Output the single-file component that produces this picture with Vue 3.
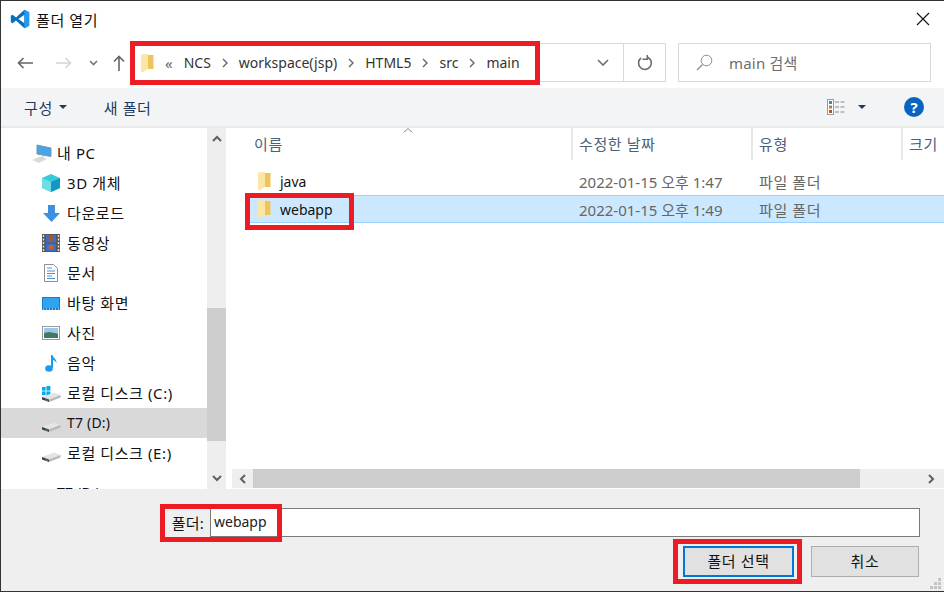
<script setup>
const crumbs = ['NCS', 'workspace(jsp)', 'HTML5', 'src', 'main']

const places = [
  { name: '내 PC', icon: 'pc', root: true },
  { name: '3D 개체', icon: 'cube' },
  { name: '다운로드', icon: 'down' },
  { name: '동영상', icon: 'film' },
  { name: '문서', icon: 'doc' },
  { name: '바탕 화면', icon: 'desk' },
  { name: '사진', icon: 'photo' },
  { name: '음악', icon: 'music' },
  { name: '로컬 디스크 (C:)', icon: 'win' },
  { name: 'T7 (D:)', icon: 'drive', active: true, latin: true },
  { name: '로컬 디스크 (E:)', icon: 'drive' },
  { name: 'T7 (D:)', icon: 'drive', root: true, gap: true, latin: true }
]

const files = [
  { name: 'java', date: '2022-01-15 오후 1:47', type: '파일 폴더' },
  { name: 'webapp', date: '2022-01-15 오후 1:49', type: '파일 폴더', selected: true }
]
</script>

<template>
  <div class="dialog">
    <div class="title-bar">
      <svg class="app-icon" width="20" height="20" viewBox="0 0 100 100">
        <path fill="#0a6fb8" d="M72 4 30 42 13 29 4 34v32l9 5 17-13 42 38 24-12V16z" />
        <path fill="#fff" d="M72 29 42 50l30 21z" />
        <path fill="#1f9cf0" d="M72 4l24 12v68L72 96z" />
      </svg>
      <span class="title-text">폴더 열기</span>
      <svg class="close-icon" width="14" height="14" viewBox="0 0 14 14">
        <path d="M1 1l12 12M13 1 1 13" stroke="#111" stroke-width="1.1" fill="none" />
      </svg>
    </div>

    <div class="nav-bar">
      <div class="nav-btn wide">
        <svg width="16" height="12" viewBox="0 0 16 12"><path d="M16 6H1.500M6.500 1l-5 5 5 5" stroke="#666" stroke-width="1.600" fill="none" /></svg>
      </div>
      <div class="nav-btn wide">
        <svg width="16" height="12" viewBox="0 0 16 12"><path d="M0 6h14.500M9.500 1l5 5-5 5" stroke="#d4d4d4" stroke-width="1.600" fill="none" /></svg>
      </div>
      <div class="nav-btn small">
        <svg width="9" height="6" viewBox="0 0 9 6"><path d="M1 1l3.500 3.500L8 1" stroke="#777" stroke-width="1.600" fill="none" /></svg>
      </div>
      <div class="nav-btn medium">
        <svg width="12" height="16" viewBox="0 0 12 16"><path d="M6 16V1.500M1 6.500l5-5 5 5" stroke="#666" stroke-width="1.600" fill="none" /></svg>
      </div>

      <div class="address">
        <svg class="crumb-folder" width="13" height="18" viewBox="0 0 13 18">
          <path fill="#eec45c" d="M6 1h6.500v14H6z" />
          <path fill="#fbe6a4" d="M0 .5 7 0v15l-5 3H0z" />
        </svg>
        <span class="crumb-more">«</span>
        <template v-for="(crumb, i) in crumbs" :key="crumb">
          <span class="crumb">{{ crumb }}</span>
          <svg v-if="i < crumbs.length - 1" class="crumb-sep" width="6" height="10" viewBox="0 0 6 10">
            <path d="M1 1l4 4-4 4" stroke="#666" stroke-width="1.400" fill="none" />
          </svg>
        </template>
        <svg class="address-drop" width="12" height="7" viewBox="0 0 12 7"><path d="M1 1l5 5 5-5" stroke="#6d6d6d" stroke-width="1.600" fill="none" /></svg>
        <div class="refresh">
          <svg width="16" height="16" viewBox="0 0 16 16">
            <path d="M10.600 2.200A6.400 6.400 0 1 1 4 3" stroke="#6d6d6d" stroke-width="1.600" fill="none" />
            <path d="M10.300 -.5v4.800H5.500" stroke="#6d6d6d" stroke-width="1.600" fill="none" />
          </svg>
        </div>
      </div>

      <div class="search">
        <svg width="17" height="17" viewBox="0 0 17 17">
          <circle cx="10.500" cy="6.500" r="5.300" stroke="#8a8a8a" stroke-width="1" fill="none" />
          <path d="M6.500 10.500 1 16" stroke="#8a8a8a" stroke-width="1.300" />
        </svg>
        <span>main 검색</span>
      </div>
    </div>

    <div class="tool-bar">
      <span class="tool-text">구성</span>
      <svg class="tool-caret" width="8" height="4" viewBox="0 0 8 4"><path d="M0 0h8L4 4z" fill="#1e3a5f" /></svg>
      <span class="tool-text new-folder">새 폴더</span>
      <svg class="view-icon" width="19" height="16" viewBox="0 0 19 16">
        <rect x=".5" y=".5" width="6" height="15" fill="#fff" stroke="#9a9a9a" />
        <rect x="2" y="2" width="3" height="3" fill="#3f83c6" />
        <rect x="2" y="6.500" width="3" height="3" fill="#a98b2e" />
        <rect x="2" y="11" width="3" height="3" fill="#c64a2e" />
        <path d="M8 3h4M13.500 3h4M8 8h4M13.500 8h4M8 13h4M13.500 13h4" stroke="#8a8a8a" />
      </svg>
      <svg class="view-caret" width="8" height="4" viewBox="0 0 8 4"><path d="M0 0h8L4 4z" fill="#1e3a5f" /></svg>
      <div class="help">?</div>
    </div>

    <div class="main">
      <div class="side">
        <div
          v-for="(place, i) in places"
          :key="i"
          class="place"
          :class="{ root: place.root, active: place.active, gap: place.gap }"
        >
          <span class="place-icon">
            <svg v-if="place.icon === 'pc'" width="20" height="22" viewBox="0 0 20 22">
              <path d="M5 3l14 3v8.500L5 12z" fill="#45a5e8" stroke="#7f93a5" />
              <path d="M11 13.500v2l-3 1" stroke="#a9b4bc" fill="none" />
              <path d="M0 18l8-3.500 7 2.500-8 4z" fill="#d8dadc" />
            </svg>
            <svg v-else-if="place.icon === 'cube'" width="18" height="18" viewBox="0 0 18 18">
              <path d="M9 0l9 4v10l-9 4-9-4V4z" fill="#35cbdc" />
              <path d="M9 8l9-4v10l-9 4z" fill="#1597c6" />
              <path d="M9 8 0 4v10l9 4z" fill="#6fdde8" />
            </svg>
            <svg v-else-if="place.icon === 'down'" class="down-icon" width="17" height="17" viewBox="0 0 17 17">
              <path d="M5 0h7v8h5l-8.500 9L0 8h5z" fill="#3f8fe0" />
            </svg>
            <svg v-else-if="place.icon === 'film'" width="18" height="18" viewBox="0 0 18 18">
              <rect width="18" height="18" fill="#555" />
              <path d="M1.500 1v16M16.500 1v16" stroke="#ddd" stroke-width="1.500" stroke-dasharray="2 1.500" />
              <rect x="4" y="1" width="10" height="7.500" fill="#3a6fd0" />
              <rect x="4" y="9.500" width="10" height="7.500" fill="#3a6fd0" />
              <circle cx="9" cy="4.500" r="2.500" fill="#b5532a" />
              <circle cx="9" cy="13" r="2.500" fill="#c8622c" />
            </svg>
            <svg v-else-if="place.icon === 'doc'" class="doc-icon" width="14" height="18" viewBox="0 0 14 18">
              <path d="M.5.500h9l4 4v13H.5z" fill="#fff" stroke="#8f8f8f" />
              <path d="M3 4h5M3 7h8M3 9.500h8M3 12h5M3 14.500h8" stroke="#4d94d6" />
            </svg>
            <svg v-else-if="place.icon === 'desk'" width="18" height="13" viewBox="0 0 18 13">
              <rect width="18" height="13" fill="#0f7fd6" />
              <rect x="1" y="1" width="16" height="10" fill="#2fa4ee" />
              <path d="M1 12h16" stroke="#fff" stroke-dasharray="1 2" />
            </svg>
            <svg v-else-if="place.icon === 'photo'" width="18" height="14" viewBox="0 0 18 14">
              <rect x=".5" y=".5" width="17" height="13" fill="#fff" stroke="#9a9a9a" />
              <rect x="2" y="2" width="14" height="5" fill="#9cc7e8" />
              <path d="M2 7l5-1 9 1.500V12H2z" fill="#3f7a62" />
            </svg>
            <svg v-else-if="place.icon === 'music'" class="music-icon" width="12" height="17" viewBox="0 0 12 17">
              <ellipse cx="4" cy="13.500" rx="3.800" ry="3.300" fill="#1a9bf0" />
              <path d="M6 13V0h1.500c.5 3 4.500 4 4 8-.8-2-3-3-3.500-3v8z" fill="#1a9bf0" />
            </svg>
            <svg v-else width="19" height="20" viewBox="0 0 19 20">
              <g v-if="place.icon === 'win'" fill="#00adef">
                <rect x="0" y="4" width="3.600" height="3.600" />
                <rect x="4.400" y="3" width="4" height="4.600" />
                <rect x="0" y="8.400" width="3.600" height="3.600" />
                <rect x="4.400" y="8.400" width="4" height="4.600" />
              </g>
              <path d="M0 14l12-4.500 6.500 2.500L7 16.500z" fill="#e2e4e6" />
              <path d="M7 16.500 18.500 12v2.500L7 19z" fill="#b5b9bc" />
              <path d="M0 14l7 2.500V19L0 16.500z" fill="#3f3f3f" />
              <path d="M3.500 16.700l2 .8" stroke="#4caf50" />
            </svg>
          </span>
          <span class="place-name" :class="{ latin: place.latin }">{{ place.name }}</span>
        </div>
      </div>

      <div class="side-scroll">
        <svg class="scroll-arrow" width="10" height="7" viewBox="0 0 10 7"><path d="M1 6l4-4 4 4" stroke="#606060" stroke-width="2" fill="none" /></svg>
        <div class="side-thumb"></div>
        <svg class="scroll-arrow bottom" width="10" height="7" viewBox="0 0 10 7"><path d="M1 1l4 4 4-4" stroke="#606060" stroke-width="2" fill="none" /></svg>
      </div>

      <div class="list">
        <div class="list-head">
          <div class="col-head first">
            이름
            <svg class="sort-caret" width="10" height="5" viewBox="0 0 10 5"><path d="M.5 4.500 5 .5l4.500 4" stroke="#8a8a8a" fill="none" /></svg>
          </div>
          <div class="col-head">수정한 날짜</div>
          <div class="col-head">유형</div>
          <div class="col-head">크기</div>
        </div>

        <div class="rows">
          <div v-for="file in files" :key="file.name" class="row" :class="{ selected: file.selected }">
            <div class="row-name">
              <svg width="13" height="18" viewBox="0 0 13 18">
                <path fill="#eec45c" d="M6 1h6.500v14H6z" />
                <path fill="#fbe6a4" d="M0 .5 7 0v15l-5 3H0z" />
              </svg>
              <span>{{ file.name }}</span>
            </div>
            <div class="row-cell date">{{ file.date }}</div>
            <div class="row-cell">{{ file.type }}</div>
          </div>
        </div>

        <div class="h-scroll">
          <svg class="h-arrow" width="7" height="10" viewBox="0 0 7 10"><path d="M6 1 2 5l4 4" stroke="#606060" stroke-width="2" fill="none" /></svg>
          <div class="h-thumb"></div>
          <svg class="h-arrow right" width="7" height="10" viewBox="0 0 7 10"><path d="M1 1l4 4-4 4" stroke="#606060" stroke-width="2" fill="none" /></svg>
        </div>
      </div>
    </div>

    <div class="footer">
      <div class="folder-row">
        <span class="folder-label">폴더:</span>
        <div class="folder-input">webapp</div>
      </div>
      <div class="button-row">
        <button class="btn primary">폴더 선택</button>
        <button class="btn">취소</button>
      </div>
      <svg class="grip" width="11" height="11" viewBox="0 0 11 11" fill="#c4c4c4">
        <rect x="8" y="0" width="3" height="3" />
        <rect x="4" y="4" width="3" height="3" />
        <rect x="8" y="4" width="3" height="3" />
        <rect x="0" y="8" width="3" height="3" />
        <rect x="4" y="8" width="3" height="3" />
        <rect x="8" y="8" width="3" height="3" />
      </svg>
    </div>

    <div class="mark mark-address"></div>
    <div class="mark mark-row"></div>
    <div class="mark mark-folder"></div>
    <div class="mark mark-button"></div>
  </div>
</template>

<style scoped>
.dialog {
  position: relative;
  width: 944px;
  height: 592px;
  box-sizing: border-box;
  border-top: 1px solid #333;
  border-left: 1px solid #333;
  border-bottom: 1px solid #333;
  background: #fff;
  display: flex;
  flex-direction: column;
  overflow: hidden;
  font-family: "Noto Sans", "Noto Sans CJK KR", sans-serif;
  font-size: 15px;
  letter-spacing: 0.6px;
  color: #111;
}

.title-bar {
  height: 40px;
  display: flex;
  align-items: center;
  padding: 0 0 4px 9px;
  box-sizing: border-box;
  flex-shrink: 0;
}

.title-text {
  margin-left: 6px;
}

.close-icon {
  margin-left: auto;
  margin-right: 14px;
}

.nav-bar {
  height: 47px;
  display: flex;
  align-items: flex-start;
  padding: 2px 0 0 4px;
  box-sizing: border-box;
  flex-shrink: 0;
}

.nav-btn {
  height: 39px;
  display: flex;
  align-items: center;
  justify-content: center;
}

.nav-btn.wide {
  width: 39px;
}

.nav-btn.small {
  width: 21px;
}

.nav-btn.medium {
  width: 30px;
}

.address {
  width: 532px;
  height: 39px;
  box-sizing: border-box;
  border: 1px solid #d9d9d9;
  display: flex;
  align-items: center;
  padding-left: 6px;
  font-size: 14px;
  letter-spacing: 0;
}

.crumb-more {
  margin: 0 11px;
  color: #666;
  font-size: 15px;
}

.crumb {
  color: #333;
}

.crumb-sep {
  margin: 0 11px;
}

.address-drop {
  margin-left: auto;
  margin-right: 14px;
}

.refresh {
  width: 42px;
  height: 37px;
  border-left: 1px solid #d9d9d9;
  box-sizing: border-box;
  display: flex;
  align-items: center;
  justify-content: center;
}

.search {
  width: 253px;
  height: 39px;
  margin-left: 12px;
  box-sizing: border-box;
  border: 1px solid #d9d9d9;
  display: flex;
  align-items: center;
  padding-left: 17px;
  gap: 16px;
  color: #6d6d6d;
  letter-spacing: 0.2px;
}

.tool-bar {
  height: 40px;
  box-sizing: border-box;
  background: #f3f4f6;
  border-bottom: 2px solid #e9e9e9;
  display: flex;
  align-items: center;
  padding-left: 23px;
  flex-shrink: 0;
}

.tool-text {
  color: #1e3a5f;
}

.tool-caret {
  margin-left: 6px;
}

.new-folder {
  margin-left: 37px;
}

.view-icon {
  margin-left: auto;
}

.view-caret {
  margin-left: 12px;
}

.help {
  width: 20px;
  height: 20px;
  margin: 0 20px 0 38px;
  border-radius: 50%;
  background: #0a63c0;
  color: #fff;
  font-size: 15px;
  font-weight: 700;
  letter-spacing: 0;
  line-height: 20px;
  text-align: center;
}

.main {
  flex: 1;
  min-height: 0;
  display: flex;
}

.side {
  width: 206px;
  padding-top: 10px;
  box-sizing: border-box;
  overflow: hidden;
  flex-shrink: 0;
}

.place {
  height: 30px;
  display: flex;
  align-items: center;
  padding-left: 41px;
}

.place.root {
  padding-left: 31px;
}

.place.gap {
  margin-top: 10px;
}

.place.active {
  background: #d9d9d9;
}

.place-icon {
  width: 25px;
  height: 20px;
  display: flex;
  align-items: center;
}

.down-icon {
  margin-left: 1px;
}

.doc-icon {
  margin-left: 2px;
}

.music-icon {
  margin-left: 3px;
}

.place-name {
  margin-bottom: 2px;
  white-space: nowrap;
}

.latin {
  font-size: 14px;
  letter-spacing: 0.2px;
}

.side-scroll {
  width: 19px;
  background: #eeeeee;
  display: flex;
  flex-direction: column;
  align-items: center;
  flex-shrink: 0;
}

.scroll-arrow {
  margin-top: 7px;
}

.scroll-arrow.bottom {
  margin-top: auto;
  margin-bottom: 7px;
}

.side-thumb {
  width: 19px;
  height: 133px;
  margin-top: 166px;
  background: #cdcdcd;
}

.list {
  flex: 1;
  min-width: 0;
  margin-left: 6px;
  display: flex;
  flex-direction: column;
}

.list-head {
  height: 32px;
  display: grid;
  grid-template-columns: 339px 180px 150px 1fr;
  flex-shrink: 0;
}

.col-head {
  position: relative;
  border-left: 2px solid #e8e8e8;
  padding-left: 6px;
  line-height: 32px;
  color: #4c607a;
  white-space: nowrap;
}

.col-head.first {
  border-left: none;
  padding-left: 22px;
}

.sort-caret {
  position: absolute;
  left: 171px;
  top: 0;
}

.rows {
  margin: 7px 0 0 18px;
}

.row {
  height: 28px;
  box-sizing: border-box;
  display: grid;
  grid-template-columns: 321px 180px 150px;
  align-items: center;
  border-top: 1px solid transparent;
  border-bottom: 1px solid transparent;
}

.row.selected {
  background: #cce8ff;
  border-color: #99d1ff;
}

.row-name {
  display: flex;
  align-items: center;
  gap: 9px;
  padding-left: 8px;
  color: #111;
  font-size: 14px;
  letter-spacing: 0;
}

.row-cell {
  padding-left: 8px;
  color: #666;
}

.row-cell.date {
  letter-spacing: 0;
}

.h-scroll {
  height: 19px;
  margin-top: auto;
  margin-bottom: 1px;
  background: #eeeeee;
  display: flex;
  align-items: center;
  flex-shrink: 0;
}

.h-arrow {
  margin: 0 7px;
}

.h-thumb {
  width: 607px;
  height: 19px;
  background: #cdcdcd;
}

.h-arrow.right {
  margin-left: auto;
  margin-right: 9px;
}

.footer {
  position: relative;
  height: 102px;
  box-sizing: border-box;
  background: #efefef;
  padding: 19px 25px 0 0;
  flex-shrink: 0;
}

.folder-row {
  display: flex;
  align-items: center;
  justify-content: flex-end;
  margin-right: -1px;
}

.folder-label {
  margin-right: 6px;
  letter-spacing: 0.2px;
}

.folder-input {
  width: 710px;
  height: 29px;
  box-sizing: border-box;
  background: #fff;
  border: 1px solid #7a7a7a;
  padding-left: 3px;
  line-height: 26px;
  color: #222;
  font-size: 14px;
  letter-spacing: 0;
}

.button-row {
  display: flex;
  justify-content: flex-end;
  gap: 17px;
  margin-top: 9px;
}

.btn {
  width: 108px;
  height: 31px;
  box-sizing: border-box;
  background: #e1e1e1;
  border: 1px solid #adadad;
  font: inherit;
  letter-spacing: inherit;
  color: #111;
  padding: 0 0 2px;
}

.btn.primary {
  width: 111px;
  border: 2px solid #0078d7;
}

.grip {
  position: absolute;
  right: 3px;
  bottom: 2px;
}

.mark {
  position: absolute;
  box-sizing: border-box;
  border: 5px solid #ed1c24;
}

.mark-address {
  left: 129px;
  top: 40px;
  width: 410px;
  height: 44px;
}

.mark-row {
  left: 244px;
  top: 192px;
  width: 109px;
  height: 37px;
}

.mark-folder {
  left: 159px;
  top: 503px;
  width: 122px;
  height: 38px;
}

.mark-button {
  left: 672px;
  top: 538px;
  width: 129px;
  height: 45px;
}
</style>
